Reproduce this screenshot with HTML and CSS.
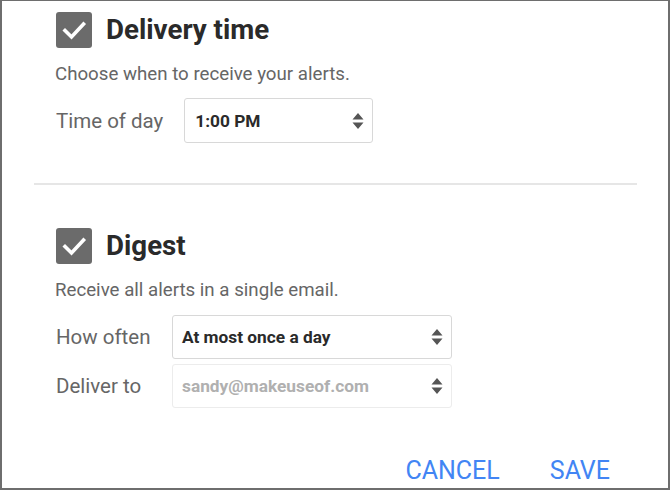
FILE: index.html
```html
<!DOCTYPE html>
<html>
<head>
<meta charset="utf-8">
<link rel="stylesheet" href="styles.css">
</head>
<body>
<div class="frame">
  <section class="section first">
    <div class="head">
      <span class="check"><svg viewBox="0 0 36 36" width="36" height="36"><path d="M9 18.5 L15.5 25 L27.5 12" fill="none" stroke="#fff" stroke-width="3.6" stroke-linecap="square"/></svg></span>
      <h2 class="title">Delivery time</h2>
    </div>
    <p class="desc">Choose when to receive your alerts.</p>
    <div class="row">
      <span class="label">Time of day</span>
      <div class="select sel-time"><span class="val">1:00 PM</span><span class="arrows"><svg viewBox="0 0 12 18" width="12" height="18"><path d="M6 1 L11.5 7.5 H0.5 Z M6 17 L11.5 10.5 H0.5 Z" fill="#555"/></svg></span></div>
    </div>
  </section>
  <hr class="divider">
  <section class="section second">
    <div class="head">
      <span class="check"><svg viewBox="0 0 36 36" width="36" height="36"><path d="M9 18.5 L15.5 25 L27.5 12" fill="none" stroke="#fff" stroke-width="3.6" stroke-linecap="square"/></svg></span>
      <h2 class="title">Digest</h2>
    </div>
    <p class="desc">Receive all alerts in a single email.</p>
    <div class="grid">
      <span class="label">How often</span>
      <div class="select sel-wide"><span class="val">At most once a day</span><span class="arrows"><svg viewBox="0 0 12 18" width="12" height="18"><path d="M6 1 L11.5 7.5 H0.5 Z M6 17 L11.5 10.5 H0.5 Z" fill="#555"/></svg></span></div>
      <span class="label">Deliver to</span>
      <div class="select sel-wide disabled"><span class="val">sandy@makeuseof.com</span><span class="arrows"><svg viewBox="0 0 12 18" width="12" height="18"><path d="M6 1 L11.5 7.5 H0.5 Z M6 17 L11.5 10.5 H0.5 Z" fill="#555"/></svg></span></div>
    </div>
  </section>
  <div class="actions">
    <button class="btn">CANCEL</button>
    <button class="btn">SAVE</button>
  </div>
</div>
</body>
</html>
```
FILE: styles.css
```css
html, body {
  margin: 0;
  padding: 0;
  background: #fff;
}
body {
  font-family: Roboto, "Liberation Sans", Arial, sans-serif;
}
.frame {
  width: 670px;
  height: 490px;
  box-sizing: border-box;
  border-top: 1px solid #6e6e6e;
  border-left: 2px solid #6e6e6e;
  border-right: 2px solid #6e6e6e;
  border-bottom: 2px solid #6e6e6e;
  position: relative;
  overflow: hidden;
}
.section {
  padding-left: 54px;
}
.first {
  padding-top: 11px;
}
.head {
  display: flex;
  align-items: center;
  gap: 14px;
}
.check {
  width: 36px;
  height: 36px;
  border-radius: 3px;
  background: #6b6b6b;
  display: flex;
}
.title {
  margin: 0;
  font-size: 27.7px;
  font-weight: 700;
  color: #2a2a2a;
  line-height: 36px;
}
.desc {
  margin: 15px 0 0 -1px;
  font-size: 18.7px;
  color: #666;
  line-height: 22px;
}
.row {
  display: flex;
  align-items: center;
  margin-top: 13px;
}
.label {
  font-size: 20.5px;
  color: #666;
}
.select {
  box-sizing: border-box;
  display: flex;
  align-items: center;
  justify-content: space-between;
  border: 1px solid #d8d8d8;
  border-radius: 3px;
  padding: 0 8px 0 10px;
  font-size: 17.3px;
  font-weight: 700;
  color: #2a2a2a;
}
.sel-time {
  width: 189px;
  height: 45px;
  margin-left: 21px;
}
.divider {
  border: 0;
  height: 2px;
  background: #e6e6e6;
  margin: 40px 0 0 32px;
  width: 603px;
}
.second {
  padding-top: 43px;
}
.grid {
  display: grid;
  grid-template-columns: 116px 280px;
  row-gap: 5px;
  align-items: center;
  margin-top: 14px;
}
.sel-wide {
  height: 44px;
  padding-left: 9px;
}
.disabled {
  border-color: #ececec;
  color: #b0b0b0;
}
.arrows {
  display: flex;
}
.actions {
  position: absolute;
  right: 58px;
  bottom: 3px;
  display: flex;
  gap: 50px;
}
.btn {
  border: 0;
  background: none;
  padding: 0;
  font-family: Roboto, "Liberation Sans", Arial, sans-serif;
  font-size: 25px;
  line-height: 29px;
  color: #4285f4;
}
```
